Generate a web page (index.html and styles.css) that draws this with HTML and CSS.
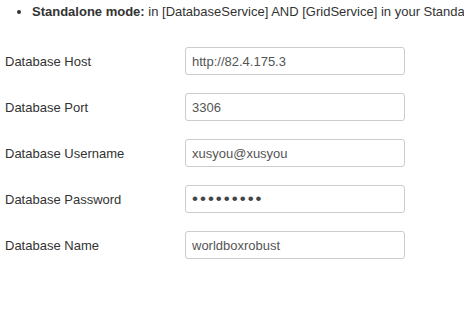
FILE: index.html
```html
<!DOCTYPE html>
<html lang="en">
<head>
    <meta charset="UTF-8">
    <meta name="viewport" content="width=device-width, initial-scale=1.0">
    <title>Database settings</title>
    <link rel="stylesheet" href="styles.css">
</head>
<body>

    <ul class="notes">
        <li><b>Standalone mode:</b> in [DatabaseService] AND [GridService] in your Standalone.ini</li>
    </ul>

    <div class="form">
        <div class="row">
            <label for="host">Database Host</label>
            <input type="text" id="host" value="http://82.4.175.3">
        </div>
        <div class="row">
            <label for="port">Database Port</label>
            <input type="text" id="port" value="3306">
        </div>
        <div class="row">
            <label for="user">Database Username</label>
            <input type="text" id="user" value="xusyou@xusyou">
        </div>
        <div class="row">
            <label for="pass">Database Password</label>
            <input type="password" id="pass" value="123456789">
        </div>
        <div class="row">
            <label for="name">Database Name</label>
            <input type="text" id="name" value="worldboxrobust">
        </div>
    </div>

</body>
</html>
```

FILE: styles.css
```css
body {
    margin: 0;
    font-family: "Liberation Sans", Arial, sans-serif;
    font-size: 13px;
    color: #333;
    background: #fff;
    overflow: hidden;
}

.notes {
    margin: 3px 0 0 0;
    padding-left: 32px;
    line-height: 18px;
    white-space: nowrap;
}

.form {
    margin-top: 26px;
}

.row {
    display: flex;
    align-items: center;
    height: 28px;
    margin-bottom: 18px;
}

.row label {
    width: 180px;
    padding-left: 5px;
}

.row input {
    box-sizing: border-box;
    width: 220px;
    height: 28px;
    margin: 0;
    padding: 0 6px;
    border: 1px solid #ccc;
    border-radius: 3px;
    font-family: "Liberation Sans", Arial, sans-serif;
    font-size: 13px;
    color: #555;
    background: #fff;
    outline: none;
}

.row input[type="password"] {
    font-size: 17px;
    letter-spacing: 2px;
    color: #444;
}
```
